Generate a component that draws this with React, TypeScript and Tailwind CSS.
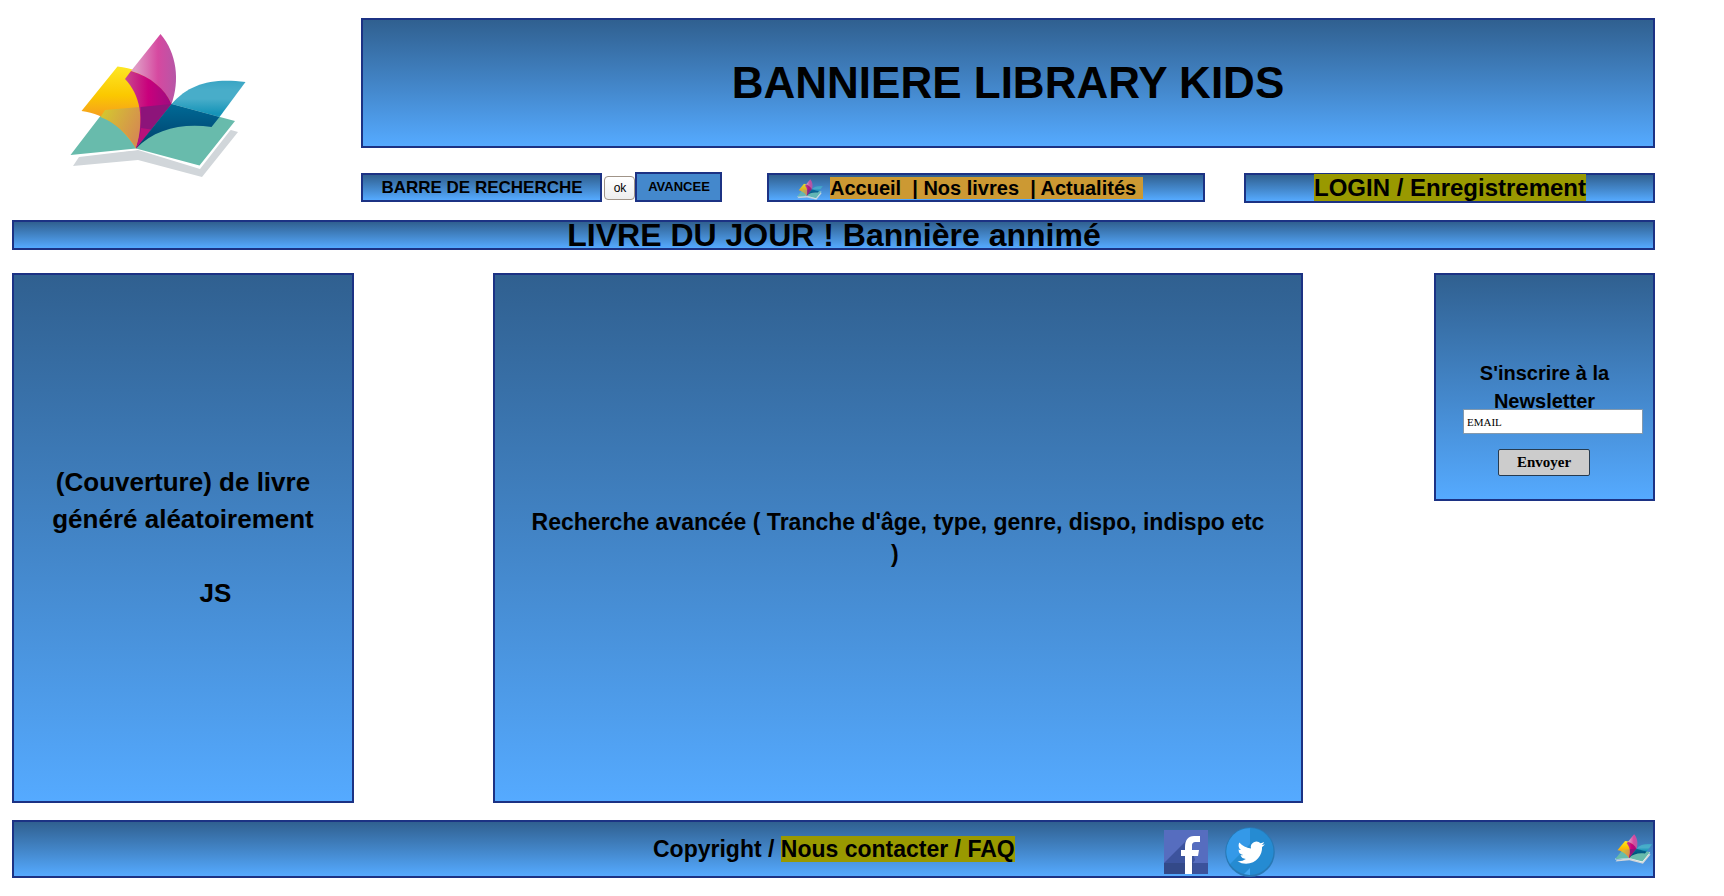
import React from "react";

const PANEL =
  "box-border border-2 border-[#1c3284] bg-[linear-gradient(to_bottom,#306090_0%,#4488cc_55%,#55aaff_100%)]";

function Logo({ className, id }: { className?: string; id: string }) {
  return (
    <svg viewBox="20 13 170 145" preserveAspectRatio="none" className={className} aria-hidden="true">
      <defs>
        <linearGradient id={id + "y"} x1="0" y1="0" x2="0" y2="1">
          <stop offset="0" stopColor="#fde725" />
          <stop offset="0.35" stopColor="#fbc800" />
          <stop offset="0.6" stopColor="#f6a01e" />
          <stop offset="1" stopColor="#f6a01e" />
        </linearGradient>
        <linearGradient id={id + "o"} x1="0" y1="0" x2="1" y2="0.5">
          <stop offset="0" stopColor="#d4cc2c" />
          <stop offset="1" stopColor="#d58c50" />
        </linearGradient>
        <linearGradient id={id + "p"} x1="0" y1="0" x2="1" y2="0">
          <stop offset="0.1" stopColor="#df9cc5" />
          <stop offset="0.6" stopColor="#d649a0" />
          <stop offset="1" stopColor="#b656a6" />
        </linearGradient>
        <linearGradient id={id + "m"} x1="0" y1="0" x2="1" y2="0">
          <stop offset="0" stopColor="#c84a8e" />
          <stop offset="0.5" stopColor="#c9007c" />
          <stop offset="1" stopColor="#9c0c80" />
        </linearGradient>
        <linearGradient id={id + "b"} x1="0" y1="0" x2="0" y2="1">
          <stop offset="0" stopColor="#3aa5c4" />
          <stop offset="0.25" stopColor="#48adc9" />
          <stop offset="0.5" stopColor="#48adc9" />
          <stop offset="0.9" stopColor="#1694b8" />
        </linearGradient>
        <linearGradient id={id + "n"} x1="0" y1="0" x2="0" y2="1">
          <stop offset="0" stopColor="#006a96" />
          <stop offset="1" stopColor="#003f6a" />
        </linearGradient>
      </defs>
      <path d="M29 137L138 124 181 110 188 112 152 157 88 140 23 146Z" fill="#d1d6da" />
      <path d="M20 136L88 130 150 149 186 103 184 100 22 132Z" fill="#fff" />
      <path d="M20.500 135L55 90 121 84 185 101 149.500 145.500 86 128.500Z" fill="#68bbac" />
      <path d="M67.500 46.500C96 50 116 64 121.500 84L86 128.500C75 110 56 94 31.500 91Z" fill={`url(#${id}y)`} />
      <path d="M55 90L90 87C91 104 91 118 86 128.500C78 113 66 103 50.500 97Z" fill={`url(#${id}o)`} />
      <path d="M110.500 14C127 33 130 61 121.500 84C115 70 101 57 81 51Z" fill={`url(#${id}p)`} />
      <path d="M81 51C101 57 115 69 121.500 84L86 128.500C95 98 90 75 75 59Z" fill={`url(#${id}m)`} />
      <path d="M90.500 87L121.500 84 86 128.500C91 115 91 102 90.500 87Z" fill="#8d147a" />
      <path d="M91 108L101 109.500 86 128.500Q90 117 91 108Z" fill="#b8107b" />
      <path d="M121.500 84C140 63 163 58 195.500 62L169.500 97Z" fill={`url(#${id}b)`} />
      <path d="M121.500 84L169.500 97 161.500 107C132 103 105 109 86 128.500Z" fill={`url(#${id}n)`} />
    </svg>
  );
}

function Facebook() {
  return (
    <svg viewBox="0 0 44 44" className="h-11 w-11 shrink-0" aria-label="Facebook">
      <path fill="#566dbf" d="M0 0h44v44H0z" />
      <path fill="#3c539d" d="M25 8L0 33v11h21l10-14z" />
      <path fill="#314783" fillOpacity=".8" d="M0 33h44v11H0z" />
      <path fill="#3b529b" d="M29 33h15v11H29z" />
      <path fill="#fff" d="M21 44V26h-4v-6h4v-3c0-7 3-11 9-11h6v6h-4c-3 0-4 1-4 4v4h7l-1 6h-6v18z" />
    </svg>
  );
}

function Twitter() {
  return (
    <svg viewBox="0 0 50 50" className="h-[50px] w-[50px] shrink-0" aria-label="Twitter">
      <circle cx="25" cy="25" r="24.800" fill="#2879b5" />
      <circle cx="25" cy="24.500" r="23.500" fill="#258bd2" />
      <path d="M25 1.200A23.300 23.300 0 0 0 5 37L25 17Z" fill="#3499e8" />
      <path d="M19 47l6-6v7z" fill="#43a8f3" />
      <path
        transform="translate(12.500 12) scale(1.140)"
        fill="#fff"
        d="M24 4.557a9.830 9.830 0 0 1-2.828.775 4.932 4.932 0 0 0 2.165-2.724 9.864 9.864 0 0 1-3.127 1.195 4.916 4.916 0 0 0-8.384 4.482C7.691 8.094 4.066 6.130 1.640 3.161a4.822 4.822 0 0 0-.666 2.475c0 1.710.87 3.213 2.188 4.096a4.904 4.904 0 0 1-2.228-.616v.061a4.923 4.923 0 0 0 3.946 4.827 4.996 4.996 0 0 1-2.212.085 4.936 4.936 0 0 0 4.604 3.417A9.867 9.867 0 0 1 0 19.540a13.940 13.940 0 0 0 7.548 2.212c9.142 0 14.307-7.721 13.995-14.646A10.025 10.025 0 0 0 24 4.557z"
      />
    </svg>
  );
}

export default function App() {
  return (
    <div className="h-[896px] w-[1724px] overflow-hidden bg-white pl-3 pt-[18px] font-['Liberation_Sans',sans-serif] font-bold text-black">
      <div className="w-[1643px]">
        <header className="flex h-[202px]">
          <div className="w-[349px] shrink-0 pl-[58px] pt-[15px]">
            <Logo id="main" className="h-[145px] w-[170px] overflow-visible" />
          </div>
          <div className="w-[1294px]">
            <h1 className={`${PANEL} flex h-[130px] items-center justify-center text-[44px]`}>
              <span>BANNIERE LIBRARY KIDS</span>
            </h1>
            <div className="mt-6 flex items-start">
              <div className={`${PANEL} mt-px flex h-[29px] w-[241px] items-center justify-center pl-px text-[17px]`}>
                BARRE DE RECHERCHE
              </div>
              <button className="ml-[2px] mt-1 h-6 w-[31px] rounded-[4px] border border-[#a09488] bg-gradient-to-b from-white to-[#eeeeee] pl-px text-[12px] font-normal">
                ok
              </button>
              <button className="h-[30px] w-[87px] border-2 border-[#1c3284] bg-[#4488cc] pb-px pl-px text-[13px] font-bold">
                AVANCEE
              </button>
              <nav className={`${PANEL} ml-[45px] mt-px flex h-[29px] w-[438px] pl-7 text-[20px]`}>
                <Logo id="nav" className="mr-[9px] mt-1 h-[21px] w-[25px] overflow-visible opacity-85" />
                <span className="mt-0.5 -ml-px h-[22px] w-[313px] whitespace-pre bg-[#cc9933] leading-[22px]">
                  {"Accueil  | Nos livres  | Actualités "}
                </span>
              </nav>
              <div className={`${PANEL} ml-[39px] mt-px flex h-[30px] w-[411px] items-start justify-center pl-px text-[24px]`}>
                <span className="-mt-px h-[27px] bg-[#999900] leading-[27px]">LOGIN / Enregistrement</span>
              </div>
            </div>
          </div>
        </header>

        <h2 className={`${PANEL} flex h-[30px] items-center justify-center pl-px text-[32px] leading-[26px]`}>
          LIVRE DU JOUR ! Bannière annimé
        </h2>

        <main className="mt-[23px] flex h-[530px] items-start">
          <section className={`${PANEL} h-[530px] w-[342px] pt-[189px] text-center text-[26px] leading-[37px]`}>
            <p>(Couverture) de livre</p>
            <p>généré aléatoirement</p>
            <p className="pl-[65px] pt-[37px]">JS</p>
          </section>
          <section className={`${PANEL} ml-[139px] h-[530px] w-[810px] px-8 pt-[231px] text-center text-[23px] leading-8`}>
            Recherche avancée ( Tranche d'âge, type, genre, dispo, indispo etc ){"\u00a0"}
          </section>
          <aside className={`${PANEL} ml-[131px] h-[228px] w-[221px] pt-[84px] text-center text-[20px] leading-7`}>
            <p>S'inscrire à la</p>
            <p>Newsletter</p>
            <input
              defaultValue="EMAIL"
              className="-mt-[6px] ml-[27px] block h-[25px] w-[180px] border border-[#8399ad] bg-white px-[3px] font-['Liberation_Serif',serif] text-[11px] font-normal"
            />
            <button className="ml-[62px] mt-[15px] block h-[27px] w-[92px] rounded-[2px] border border-[#263b50] bg-[#cccccc] font-['Liberation_Serif',serif] text-[15px] font-bold leading-[25px]">
              Envoyer
            </button>
          </aside>
        </main>

        <footer className={`${PANEL} mt-[17px] flex h-[58px] pl-[639px] text-[23px]`}>
          <p className="mt-[14px] w-[511px] whitespace-nowrap leading-[26px]">
            Copyright / <span className="inline-block bg-[#999900]">Nous contacter / FAQ</span>
          </p>
          <div className="mt-2">
            <Facebook />
          </div>
          <div className="ml-[17px] mt-[5px]">
            <Twitter />
          </div>
          <Logo id="foot" className="ml-[340px] mt-3 h-[30px] w-9 shrink-0 overflow-visible" />
        </footer>
      </div>
    </div>
  );
}
